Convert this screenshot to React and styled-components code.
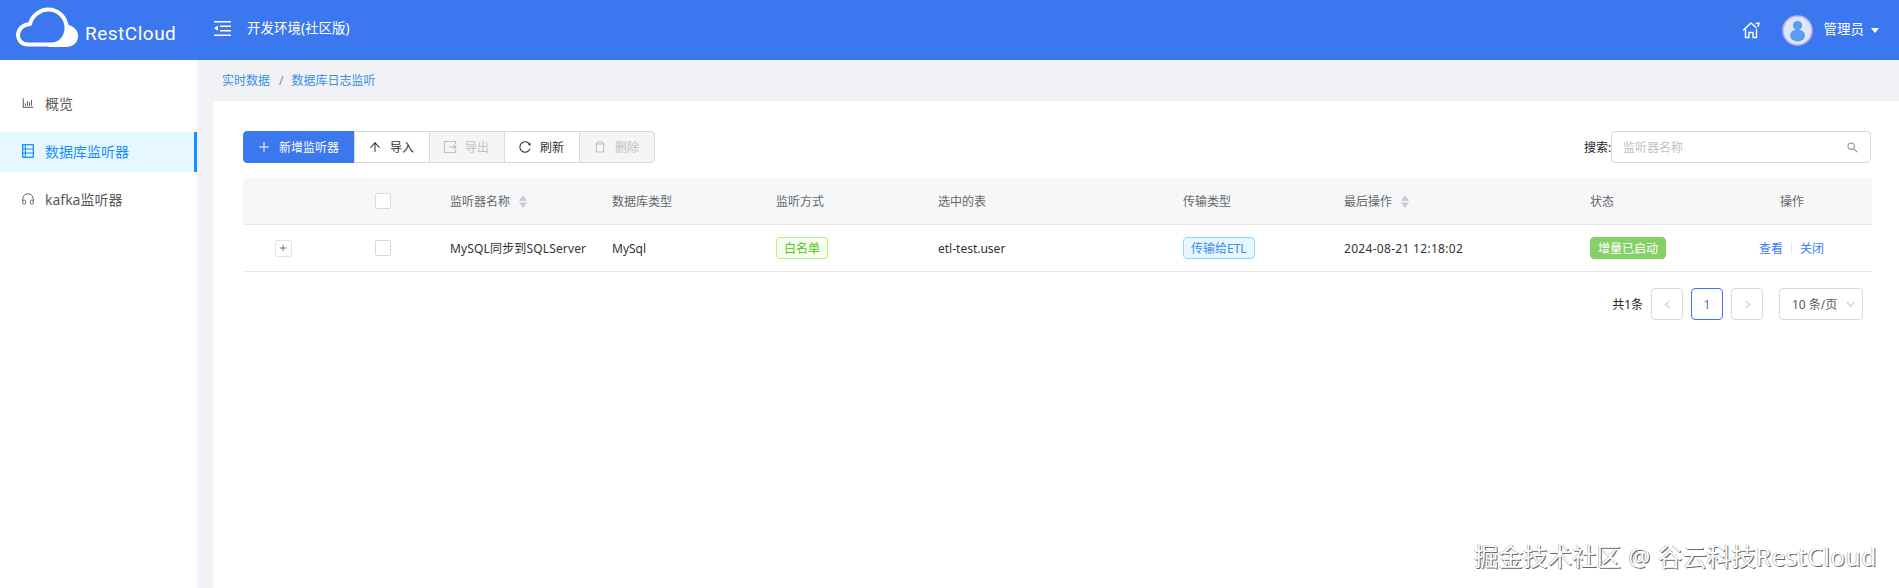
import React from 'react';
import styled, { createGlobalStyle } from 'styled-components';
import {
  AiOutlinePlus, AiOutlineArrowUp, AiOutlineReload, AiOutlineDelete,
  AiOutlineSearch, AiOutlineBarChart, AiOutlineLeft, AiOutlineRight, AiOutlineDown,
} from 'react-icons/ai';
import { Headphones, Plus } from 'lucide-react';

const FONT = '"Noto Sans", "Noto Sans CJK SC", sans-serif';
const BLUE = '#3b78f0';
const COLUMNS = '80px 119px 162px 164px 162px 245px 161px 246px 169px 121px';

const Global = createGlobalStyle`
  html, body { margin: 0; padding: 0; height: 100%; background: #fff; overflow: hidden; }
  body { font-family: ${FONT}; font-size: 12px; color: #333; }
  * { box-sizing: border-box; }
`;

const Page = styled.div`
  position: relative;
  width: 1899px;
  height: 588px;
  display: flex;
  flex-direction: column;
  overflow: hidden;
`;
const Header = styled.header`
  height: 60px;
  background: ${BLUE};
  display: flex;
  align-items: center;
  color: #fff;
  flex: none;
`;
const Brand = styled.div`
  width: 214px;
  padding-left: 16px;
  display: flex;
  align-items: flex-start;
  height: 60px;
  padding-top: 7px;
`;
const BrandName = styled.span`
  font-family: Roboto, sans-serif;
  font-size: 19px;
  letter-spacing: 0.5px;
  margin: 16px 0 0 -1px;
  line-height: 22px;
`;
const Collapse = styled.svg`
  width: 17px;
  height: 15px;
  margin: -4px 16px 0 0;
`;
const EnvName = styled.span`
  font-size: 13.5px;
  line-height: 20px;
  margin-top: -4px;
`;
const HeaderRight = styled.div`
  margin-left: auto;
  display: flex;
  align-items: center;
  padding-right: 20px;
`;
const Avatar = styled.svg`
  width: 31px;
  height: 31px;
  margin: 0 11px 0 22px;
`;
const UserName = styled.span`
  font-size: 13.5px;
  line-height: 20px;
  margin-top: -2px;
`;
const Caret = styled.span`
  width: 0;
  height: 0;
  border: 4.5px solid transparent;
  border-top: 5px solid #fff;
  border-bottom: 0;
  margin-left: 7px;
`;
const Body = styled.div`
  flex: 1;
  display: flex;
  min-height: 0;
`;
const Sidebar = styled.nav`
  width: 197px;
  background: #fff;
  padding-top: 24px;
  display: flex;
  flex-direction: column;
  gap: 8px;
  flex: none;
`;
const MenuItem = styled.div`
  height: 40px;
  display: flex;
  align-items: center;
  gap: 10px;
  padding: 0 0 2px 21px;
  font-size: 14px;
  color: ${p => (p.$active ? '#1890ff' : '#595959')};
  background: ${p => (p.$active ? '#e6f7ff' : 'transparent')};
  border-right: 3px solid ${p => (p.$active ? '#1890ff' : 'transparent')};
`;
const Main = styled.main`
  flex: 1;
  background: #f0f2f5;
  display: flex;
  flex-direction: column;
  min-width: 0;
`;
const Breadcrumb = styled.div`
  height: 41px;
  padding: 0 0 1px 25px;
  display: flex;
  align-items: center;
  color: #3a8ee6;
  font-size: 12px;
  flex: none;
`;
const Sep = styled.span`
  color: #8c8c8c;
  margin: 0 8px 0 9px;
`;
const Card = styled.section`
  flex: 1;
  margin-left: 16px;
  background: #fff;
  border-radius: 4px 0 0 0;
  padding: 30px 28px 0 30px;
`;
const Toolbar = styled.div`
  display: flex;
  justify-content: space-between;
  align-items: center;
  height: 32px;
  margin-bottom: 15px;
`;
const ButtonGroup = styled.div`
  display: flex;
`;
const ToolButton = styled.button`
  height: 32px;
  width: ${p => p.$w}px;
  font: inherit;
  font-size: 12px;
  display: flex;
  align-items: center;
  justify-content: center;
  gap: 8px;
  padding: 0 2px 0 0;
  margin-left: ${p => (p.$first ? 0 : -1)}px;
  border: 1px solid ${p => (p.$primary ? BLUE : '#d9d9d9')};
  color: ${p => (p.$primary ? '#fff' : p.disabled ? '#bfbfbf' : '#333')};
  background: ${p => (p.$primary ? BLUE : p.disabled ? '#f5f5f5' : '#fff')};
  border-radius: ${p => (p.$first ? '4px 0 0 4px' : p.$last ? '0 4px 4px 0' : '0')};
  svg { font-size: 14px; flex: none; }
`;
const SearchBox = styled.div`
  display: flex;
  align-items: center;
`;
const SearchLabel = styled.span`
  color: #262626;
  font-size: 12px;
  width: 27px;
  white-space: nowrap;
`;
const SearchInput = styled.div`
  width: 260px;
  height: 32px;
  border: 1px solid #d9d9d9;
  border-radius: 4px;
  display: flex;
  align-items: center;
  justify-content: space-between;
  padding: 0 11px;
  color: #bfbfbf;
  svg { color: #8c8c8c; font-size: 13px; }
`;
const Row = styled.div`
  display: grid;
  grid-template-columns: ${COLUMNS};
  height: 47px;
  align-items: center;
  border-bottom: 1px solid #e8e8e8;
  width: 1629px;
`;
const HeadRow = styled(Row)`
  background: #f5f7f9;
  color: #666;
  border-radius: 4px 4px 0 0;
`;
const Cell = styled.div`
  padding-left: ${p => p.$inset ?? 8}px;
  display: flex;
  align-items: center;
  white-space: nowrap;
  justify-content: ${p => (p.$center ? 'center' : 'flex-start')};
  letter-spacing: ${p => p.$spread || 0}px;
  ${p => (p.$center ? 'padding-left: 0;' : '')}
`;
const SortIcon = styled.svg`
  width: 8px;
  height: 13px;
  margin-left: 9px;
  fill: #c8ccd0;
`;
const Check = styled.span`
  width: 16px;
  height: 16px;
  background: #fff;
  border: 1px solid #d9d9d9;
  border-radius: 2px;
  display: block;
`;
const Expand = styled.span`
  width: 17px;
  height: 17px;
  border: 1px solid #e4e4e4;
  border-radius: 2px;
  display: flex;
  align-items: center;
  justify-content: center;
  background: #fff;
  color: #333;
`;
const Tag = styled.span`
  height: 22px;
  display: inline-flex;
  align-items: center;
  padding: 0 7px;
  border-radius: 4px;
  border: 1px solid ${p => p.$border};
  background: ${p => p.$bg};
  color: ${p => p.$color};
  font-size: 12px;
`;
const Link = styled.a`
  color: ${BLUE};
`;
const Divider = styled.i`
  width: 1px;
  height: 12px;
  background: #e8e8e8;
  margin: 0 8px;
`;
const Pager = styled.div`
  display: flex;
  justify-content: flex-end;
  align-items: center;
  gap: 8px;
  margin-top: 16px;
  width: 1620px;
`;
const Total = styled.span`
  color: #262626;
`;
const PageBox = styled.div`
  width: 32px;
  height: 32px;
  border: 1px solid ${p => (p.$current ? BLUE : '#d9d9d9')};
  border-radius: 4px;
  display: flex;
  align-items: center;
  justify-content: center;
  color: ${p => (p.$current ? BLUE : '#bfbfbf')};
  svg { font-size: 11px; }
`;
const SizeBox = styled.div`
  width: 84px;
  height: 32px;
  margin-left: 8px;
  border: 1px solid #d9d9d9;
  border-radius: 4px;
  display: flex;
  align-items: center;
  justify-content: space-between;
  padding: 0 6px 0 12px;
  color: #595959;
  white-space: nowrap;
  svg { color: #bfbfbf; font-size: 11px; flex: none; }
`;
const Watermark = styled.div`
  position: absolute;
  left: 1474px;
  top: 541px;
  font-size: 24.5px;
  line-height: 32px;
  white-space: nowrap;
  word-spacing: 1px;
  color: #fff;
  text-shadow: 1px 1px 0 #666, -0.5px -0.5px 0 #999;
`;
const WatermarkLatin = styled.span`
  letter-spacing: 0.5px;
`;
const TableGlyph = styled.svg`
  width: 12px;
  height: 14px;
  margin: 0 1px;
`;

const Logo = () => (
  <svg width="70" height="44" viewBox="0 0 70 44" fill="none">
    <path d="M49 17 C56 18 61 22 62 27 C63 34 58 40 50 40 L30 40 C42 38 51 29 49 17Z" fill="#fff" />
    <path
      d="M12 37.5 C5 37.5 2 32 2 28.5 C2 22 7 17.5 14 17 C16 8 25 2.5 32 2.5 C42 2.5 50 10 50.5 20 C51 30 44 37.5 35 37.5 Z"
      stroke="#fff"
      strokeWidth="4"
      strokeLinejoin="round"
      fill={BLUE}
    />
  </svg>
);

const HomeIcon = () => (
  <svg width="18" height="18" viewBox="0 0 18 18" fill="none" stroke="#fff" strokeWidth="1.4" strokeLinejoin="round" strokeLinecap="round">
    <path d="M1.5 9 L9 2 L14 6.6 M14 2.6 L17 2 L16.2 5.2 M3.5 8.5 V16.5 H7 V11.5 H11 V16.5 H14.5 V8.5" />
  </svg>
);

const TableIcon = () => (
  <TableGlyph viewBox="0 0 12 14" fill="none" stroke="currentColor" strokeWidth="1.3">
    <rect x="0.7" y="0.7" width="10.6" height="12.6" />
    <path d="M0.7 5 H11.3 M0.7 9 H11.3 M3.4 0.7 V13.3" strokeWidth="1.1" />
  </TableGlyph>
);

const ExportIcon = () => (
  <svg width="14" height="14" viewBox="0 0 14 14" fill="none" stroke="currentColor" strokeWidth="1.1">
    <path d="M12.5 4 V1.5 H1.5 V12.5 H12.5 V10 M6 7 H13 M11 5 L13 7 L11 9" />
  </svg>
);

const Sort = () => (
  <SortIcon viewBox="0 0 8 13">
    <path d="M4 0 L8 6 H0 Z M0 7.4 H8 L4 13 Z" />
  </SortIcon>
);

export default function App() {
  return (
    <Page>
      <Global />
      <Header>
        <Brand>
          <Logo />
          <BrandName>RestCloud</BrandName>
        </Brand>
        <Collapse viewBox="0 0 17 15" fill="#fff">
          <rect x="0" y="0" width="17" height="1.5" />
          <rect x="6" y="4.5" width="11" height="1.5" />
          <rect x="6" y="9" width="11" height="1.5" />
          <rect x="0" y="13.5" width="17" height="1.5" />
          <path d="M0 7.2 L4 4.6 V9.8 Z" />
        </Collapse>
        <EnvName>开发环境(社区版)</EnvName>
        <HeaderRight>
          <HomeIcon />
          <Avatar viewBox="0 0 31 31">
            <circle cx="15.5" cy="15.5" r="14.5" fill="#dbe8fb" stroke="#c9a9f0" strokeWidth="1.6" />
            <circle cx="15.5" cy="10.5" r="4.6" fill="#5b9bf0" />
            <ellipse cx="15.5" cy="20.5" rx="7.5" ry="6" fill="#5b9bf0" />
          </Avatar>
          <UserName>管理员</UserName>
          <Caret />
        </HeaderRight>
      </Header>
      <Body>
        <Sidebar>
          <MenuItem><AiOutlineBarChart size={14} />概览</MenuItem>
          <MenuItem $active><TableIcon />数据库监听器</MenuItem>
          <MenuItem><Headphones size={14} strokeWidth={1.5} />kafka监听器</MenuItem>
        </Sidebar>
        <Main>
          <Breadcrumb>实时数据<Sep>/</Sep>数据库日志监听</Breadcrumb>
          <Card>
            <Toolbar>
              <ButtonGroup>
                <ToolButton $primary $first $w={112}><AiOutlinePlus />新增监听器</ToolButton>
                <ToolButton $w={76}><AiOutlineArrowUp />导入</ToolButton>
                <ToolButton $w={76} disabled><ExportIcon />导出</ToolButton>
                <ToolButton $w={76}><AiOutlineReload />刷新</ToolButton>
                <ToolButton $w={76} $last disabled><AiOutlineDelete />删除</ToolButton>
              </ButtonGroup>
              <SearchBox>
                <SearchLabel>搜索:</SearchLabel>
                <SearchInput>监听器名称<AiOutlineSearch /></SearchInput>
              </SearchBox>
            </Toolbar>
            <HeadRow>
              <Cell />
              <Cell $center><Check /></Cell>
              <Cell>监听器名称<Sort /></Cell>
              <Cell>数据库类型</Cell>
              <Cell>监听方式</Cell>
              <Cell>选中的表</Cell>
              <Cell>传输类型</Cell>
              <Cell>最后操作<Sort /></Cell>
              <Cell>状态</Cell>
              <Cell $inset={29}>操作</Cell>
            </HeadRow>
            <Row>
              <Cell $center><Expand><Plus size={10} strokeWidth={1.6} /></Expand></Cell>
              <Cell $center><Check /></Cell>
              <Cell $spread={0.15}>MySQL同步到SQLServer</Cell>
              <Cell>MySql</Cell>
              <Cell><Tag $border="#b7eb8f" $bg="#f6ffed" $color="#52c41a">白名单</Tag></Cell>
              <Cell>etl-test.user</Cell>
              <Cell><Tag $border="#91d5ff" $bg="#e6f7ff" $color="#3a8ee6">传输给ETL</Tag></Cell>
              <Cell $spread={0.3}>2024-08-21 12:18:02</Cell>
              <Cell><Tag $border="#87d068" $bg="#87d068" $color="#fff">增量已启动</Tag></Cell>
              <Cell><Link>查看</Link><Divider /><Link>关闭</Link></Cell>
            </Row>
            <Pager>
              <Total>共1条</Total>
              <PageBox><AiOutlineLeft /></PageBox>
              <PageBox $current>1</PageBox>
              <PageBox><AiOutlineRight /></PageBox>
              <SizeBox>10 条/页<AiOutlineDown /></SizeBox>
            </Pager>
          </Card>
        </Main>
      </Body>
      <Watermark>掘金技术社区 @ 谷云科技<WatermarkLatin>RestCloud</WatermarkLatin></Watermark>
    </Page>
  );
}
